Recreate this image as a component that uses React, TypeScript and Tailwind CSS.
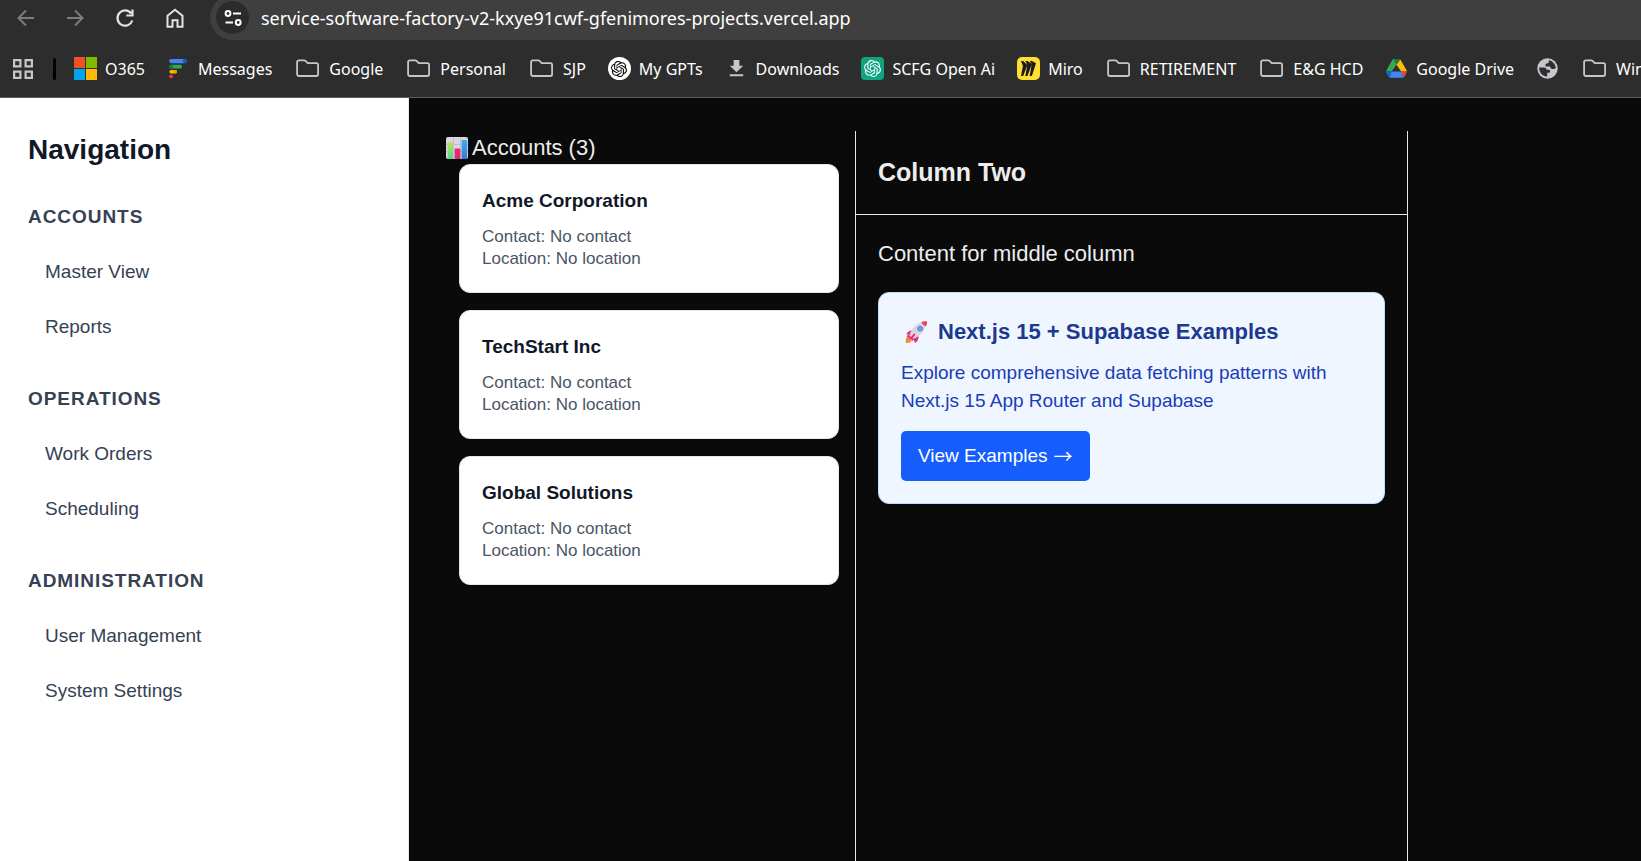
import type { ReactNode } from "react";
import { SiOpenai, SiMiro } from "react-icons/si";
import { MdFileDownload } from "react-icons/md";

const chromeFont = "font-['Noto_Sans',sans-serif]";

function FolderIcon() {
  return (
    <svg className="h-[23px] w-[27px] shrink-0" viewBox="0 0 27 23" fill="none" stroke="#c4c7c5" strokeWidth="1.8">
      <path d="M5 3.400h5.200c.7 0 1.100.3 1.600.8l1.900 1.900h8.600c1.100 0 1.800.7 1.800 1.800v9.400c0 1-.7 1.700-1.800 1.700H5c-1.100 0-1.900-.7-1.900-1.700V5.200c0-1.100.8-1.800 1.900-1.800z" />
    </svg>
  );
}

function MicrosoftIcon() {
  return (
    <svg className="size-[23px] shrink-0" viewBox="0 0 23 23">
      <path fill="#f25022" d="M0 0h11v11H0z" />
      <path fill="#7fba00" d="M12 0h11v11H12z" />
      <path fill="#00a4ef" d="M0 12h11v11H0z" />
      <path fill="#ffb900" d="M12 12h11v11H12z" />
    </svg>
  );
}

function MessagesIcon() {
  return (
    <svg className="size-[23px] shrink-0" viewBox="0 0 23 23" strokeLinecap="round">
      <path stroke="#4285f4" strokeWidth="4.2" d="M4.200 4.100h13.500" />
      <path stroke="#1a57c7" strokeWidth="4.2" d="M17.700 4.100h.3" />
      <path stroke="#34a853" strokeWidth="3.8" d="M4.200 9.700h9" />
      <path stroke="#188038" strokeWidth="3.8" d="M4 9.700h.4" />
      <path stroke="#fbbc04" strokeWidth="3.6" d="M4.200 14.800h4" />
      <path stroke="#f29900" strokeWidth="3.6" d="M8 14.800h.3" />
      <circle cx="4.100" cy="19.400" r="1.900" fill="#ea4335" />
    </svg>
  );
}

function DriveIcon() {
  return (
    <svg className="size-[23px] shrink-0" viewBox="0 0 23 23">
      <path fill="#34a853" d="M8.200 2h3.300v5.700L6.600 14.500H1.200c0-.6.100-1 .4-1.500L7.400 2.800c.2-.4.500-.7.800-.8z" />
      <path fill="#188038" d="M8.200 2h6.300c.4.1.7.4.9.8l-3.900 5.300z" />
      <path fill="#fbbc04" d="M15.400 2.500l6 10.500c.3.5.4 1 .4 1.500h-5.600l-4.700-6.700z" />
      <path fill="#4285f4" d="M6.500 14.500h9.900l2.300 5.900c-.3.200-.7.300-1.200.300H5.500c-.5 0-.9-.1-1.200-.3z" />
      <path fill="#1967d2" d="M1.200 14.500h5.400l-2.300 5.900c-.4-.2-.7-.5-.9-.9L1.600 16.300c-.3-.6-.4-1.200-.4-1.800z" />
      <path fill="#ea4335" d="M16.300 14.500h5.500c0 .6-.1 1.200-.4 1.800l-1.800 3.200c-.2.400-.5.700-.9.900z" />
    </svg>
  );
}

function GlobeIcon() {
  return (
    <svg className="size-[23px] shrink-0" viewBox="0 0 23 23">
      <circle cx="11.5" cy="11.5" r="10.2" fill="#c4c7cc" />
      <path
        fill="#2d2d2d"
        d="M3.200 10.600h4.700c1.800 0 2.600.9 2.600 2.200h2.200c.9 0 1.400.6 1.400 1.500 0 1-.6 1.500-1.600 1.500h-1.300v3.800C6.900 19.700 3.100 16.200 3.200 10.600zM12.800 3.300c3.400.6 6.500 3.400 7 7.400-.8 1.300-2.300 1.700-3.800 1.200-1.200-.4-1.800-1.200-1.800-2.300h-3.500c-.8 0-1.300-.5-1.300-1.300 0-1.300.9-2 2.300-2 .9 0 1.400-1.200 1.100-3z"
      />
    </svg>
  );
}

function AppsIcon() {
  return (
    <svg className="size-5" viewBox="0 0 20 20" fill="none" stroke="#c7c7c7" strokeWidth="2.2">
      <path d="M1.100 1.100h6.300v6.300H1.100zM12.600 1.100h6.300v6.300h-6.300zM1.100 12.600h6.300v6.300H1.100zM12.600 12.600h6.300v6.300h-6.300z" />
    </svg>
  );
}

function ChartIcon() {
  return (
    <svg className="size-[22px]" viewBox="0 0 22 22" role="img" aria-label="Chart">
      <defs>
        <linearGradient id="bar-green" x2="0" y2="1">
          <stop stopColor="#b5e352" />
          <stop offset="1" stopColor="#4fdc91" />
        </linearGradient>
        <linearGradient id="bar-blue" x2="0" y2="1">
          <stop stopColor="#35b1f2" />
          <stop offset="1" stopColor="#3b78cc" />
        </linearGradient>
      </defs>
      <rect width="22" height="22" rx="2" fill="#ddd3e3" />
      <path stroke="#c6bccf" d="M0 7.500h22M0 14.500h22M7.500 0v22M14.500 0v22" />
      <path fill="url(#bar-green)" d="M2.500 5.500h3.700c.5 0 .8.3.8.8V22H1.700V6.300c0-.5.3-.8.8-.8z" />
      <path fill="#e6286f" d="M9.500 11.500h4c.5 0 .8.3.8.8V22H8.700v-9.700c0-.5.3-.8.8-.8z" />
      <path fill="url(#bar-blue)" d="M16.400 3h3.900c.5 0 .8.3.8.8V22h-5.500V3.800c0-.5.3-.8.8-.8z" />
    </svg>
  );
}

function RocketIcon() {
  return (
    <svg className="h-6 w-7 shrink-0" viewBox="0 0 28 24" role="img" aria-label="Rocket">
      <path fill="#f9863b" d="M6.300 16.500l4.200 4.500c-1 1.500-3 2.100-5.600 2-.4-2.700-.1-5.200 1.400-6.500z" />
      <path fill="#e0336f" d="M12.500 10.500c-3.200-.5-5.800.5-7.300 3.800l4.600 1zM17.500 15.500c.4 3.300-1 6-3.500 7.500l-1.800-4.700z" />
      <path fill="#dcd3e6" d="M20 2.200c-5 1.600-9 6.300-11.300 12l4.800 4.300c6-3 10-7.500 11.300-12.300z" />
      <path fill="#ee3d5c" d="M20.300 2.100c1.700-.8 3.700-1.100 5.700-.9.200 1.900-.3 3.600-1.100 5.100-2-.6-3.600-2.100-4.600-4.200z" />
      <path fill="#ee3d78" d="M7.300 14.400l6 4.800-1.900 1.900-5.800-4.700z" />
      <path stroke="#d3276a" strokeWidth="1.800" strokeLinecap="round" d="M13.300 14.500l-2.500 3" />
      <circle cx="19.100" cy="8.700" r="2.500" fill="#5aa9e6" stroke="#6f86b8" />
    </svg>
  );
}

const bookmarks: { label: string; icon: ReactNode }[] = [
  { label: "O365", icon: <MicrosoftIcon /> },
  { label: "Messages", icon: <MessagesIcon /> },
  { label: "Google", icon: <FolderIcon /> },
  { label: "Personal", icon: <FolderIcon /> },
  { label: "SJP", icon: <FolderIcon /> },
  {
    label: "My GPTs",
    icon: (
      <span className="flex size-[23px] shrink-0 items-center justify-center rounded-full bg-white">
        <SiOpenai className="size-4 text-black" />
      </span>
    ),
  },
  { label: "Downloads", icon: <MdFileDownload className="size-[23px] shrink-0 text-[#c4c7cc]" /> },
  {
    label: "SCFG Open Ai",
    icon: (
      <span className="flex size-[23px] shrink-0 items-center justify-center rounded-[4px] bg-[#10a37f]">
        <SiOpenai className="size-[17px] text-white" />
      </span>
    ),
  },
  {
    label: "Miro",
    icon: (
      <span className="flex size-[23px] shrink-0 items-center justify-center rounded-[5px] bg-[#ffdd33]">
        <SiMiro className="size-[15px] text-[#1c1c1e]" />
      </span>
    ),
  },
  { label: "RETIREMENT", icon: <FolderIcon /> },
  { label: "E&G HCD", icon: <FolderIcon /> },
  { label: "Google Drive", icon: <DriveIcon /> },
  { label: "", icon: <GlobeIcon /> },
  { label: "Windows", icon: <FolderIcon /> },
];

function BrowserChrome() {
  return (
    <header className={`overflow-hidden border-b border-[#5c5c5c] bg-[#2d2d2d] text-white ${chromeFont}`}>
      <div className="flex h-10 items-end">
        <div className="flex h-[45px] items-center gap-[26px] pl-[13px]">
          <button type="button" aria-label="Back" className="text-[#7c7c7c]">
            <svg className="size-6" viewBox="0 0 24 24" fill="none" stroke="currentColor" strokeWidth="2">
              <path d="M21 12H6M13 4.500L5.500 12l7.500 7.500" />
            </svg>
          </button>
          <button type="button" aria-label="Forward" className="text-[#7c7c7c]">
            <svg className="size-6" viewBox="0 0 24 24" fill="none" stroke="currentColor" strokeWidth="2">
              <path d="M4 12h15M12 4.500l7.500 7.500-7.500 7.500" />
            </svg>
          </button>
          <button type="button" aria-label="Reload" className="text-[#e3e3e3]">
            <svg className="size-6" viewBox="0 0 24 24" fill="none" stroke="currentColor" strokeWidth="2.2">
              <path d="M19.300 14.500A7.600 7.600 0 1 1 18.200 7.500M19.500 3.500v6h-6.200" />
            </svg>
          </button>
          <button type="button" aria-label="Home" className="text-[#e3e3e3]">
            <svg className="size-6" viewBox="0 0 24 24" fill="none" stroke="currentColor" strokeWidth="2">
              <path d="M4.500 9.700L12 3.700l7.500 6v11.100h-5v-6.500h-5v6.500h-5z" />
            </svg>
          </button>
        </div>
        <div className="ml-[23px] flex h-[45px] flex-1 items-center gap-3 rounded-l-full bg-[#3f3f3f] pl-[6px]">
          <button
            type="button"
            aria-label="View site information"
            className="flex size-[33px] items-center justify-center rounded-full bg-[#2b2b2b]"
          >
            <svg className="h-[18px] w-[18px]" viewBox="0 0 18 18" fill="none" stroke="#fff" strokeWidth="2">
              <circle cx="4" cy="4.500" r="2.400" />
              <path d="M9 4.500h8M1.500 13.500h7.500" />
              <circle cx="14.200" cy="13.500" r="2.400" />
            </svg>
          </button>
          <input
            type="text"
            aria-label="Address"
            readOnly
            defaultValue="service-software-factory-v2-kxye91cwf-gfenimores-projects.vercel.app"
            className="min-w-0 flex-1 bg-transparent text-[18px] leading-6 outline-none"
          />
        </div>
      </div>
      <nav aria-label="Bookmarks" className="flex h-[57px] items-center pl-[13px] text-[16px] leading-6 whitespace-nowrap">
        <button type="button" aria-label="Apps">
          <AppsIcon />
        </button>
        <span className="mr-[18px] ml-5 h-[22px] w-[3px] shrink-0 rounded-sm bg-black" />
        <div className="flex items-center gap-[22px]">
          {bookmarks.map(({ label, icon }, i) => (
            <a key={i} href="#" aria-label={label || "Website"} className="flex shrink-0 items-center gap-2">
              {icon}
              {label && <span>{label}</span>}
            </a>
          ))}
        </div>
      </nav>
    </header>
  );
}

const sections = [
  { title: "Accounts", links: ["Master View", "Reports"] },
  { title: "Operations", links: ["Work Orders", "Scheduling"] },
  { title: "Administration", links: ["User Management", "System Settings"] },
];

function Sidebar() {
  return (
    <aside className="w-[409px] shrink-0 border-r border-gray-200 bg-white px-7 pt-[33px]">
      <h2 className="mb-[34px] text-[28px] leading-[38px] font-bold text-gray-900">Navigation</h2>
      <nav className="flex flex-col gap-[33px]">
        {sections.map((s) => (
          <section key={s.title}>
            <h3 className="mb-4 text-[19px] leading-7 font-bold tracking-wider text-gray-700 uppercase">{s.title}</h3>
            <ul className="flex flex-col gap-[5px]">
              {s.links.map((l) => (
                <li key={l}>
                  <a href="#" className="block rounded-md px-[17px] py-[11px] text-[19px] leading-7 text-gray-700">
                    {l}
                  </a>
                </li>
              ))}
            </ul>
          </section>
        ))}
      </nav>
    </aside>
  );
}

const accounts = ["Acme Corporation", "TechStart Inc", "Global Solutions"];

export default function App() {
  return (
    <div className="flex min-h-screen flex-col overflow-hidden bg-[#0a0a0a] font-['Liberation_Sans',Arial,sans-serif] text-[22px] leading-[33px] text-[#ededed]">
      <BrowserChrome />
      <div className="flex flex-1">
        <Sidebar />
        <main className="flex flex-1 pt-[33px] pl-[37px]">
          <section className="w-[409px] shrink-0">
            <h2 className="flex items-center gap-1">
              <ChartIcon />
              Accounts (3)
            </h2>
            <div className="flex flex-col gap-[17px] pr-4 pl-[13px]">
              {accounts.map((name) => (
                <article key={name} className="rounded-[11px] border border-gray-200 bg-white p-[22px]">
                  <h3 className="mb-[11px] text-[19px] leading-7 font-bold text-gray-900">{name}</h3>
                  <p className="text-[17px] leading-[22px] text-gray-600">Contact: No contact</p>
                  <p className="text-[17px] leading-[22px] text-gray-600">Location: No location</p>
                </article>
              ))}
            </div>
          </section>
          <section className="w-[553px] shrink-0 border-x border-gray-200">
            <div className="border-b border-gray-200 p-[22px]">
              <h2 className="text-[25px] leading-[39px] font-bold">Column Two</h2>
            </div>
            <div className="p-[22px]">
              <p className="mb-[22px]">Content for middle column</p>
              <article className="rounded-[11px] border border-blue-200 bg-blue-50 p-[22px]">
                <h3 className="mb-[11px] flex items-center gap-[9px] font-bold text-blue-900">
                  <RocketIcon />
                  Next.js 15 + Supabase Examples
                </h3>
                <p className="mb-4 text-[19px] leading-7 text-blue-800">
                  Explore comprehensive data fetching patterns with Next.js 15 App Router and Supabase
                </p>
                <a
                  href="#"
                  className="flex w-fit gap-[6px] rounded-[5px] bg-blue-600 px-[17px] py-[11px] text-[19px] leading-7 text-white"
                >
                  View Examples <span className="font-['Noto_Sans_CJK_JP',sans-serif]">→</span>
                </a>
              </article>
            </div>
          </section>
        </main>
      </div>
    </div>
  );
}
